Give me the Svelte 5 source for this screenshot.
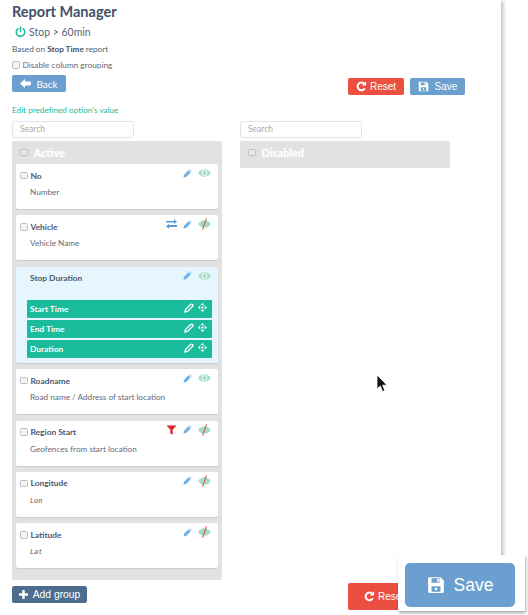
<script>
    const cards = [
        { name: 'No', desc: 'Number', check: true, hidden: false },
        { name: 'Vehicle', desc: 'Vehicle Name', check: true, hidden: true, extra: 'swap' },
        { name: 'Stop Duration', group: ['Start Time', 'End Time', 'Duration'], hidden: false },
        { name: 'Roadname', desc: 'Road name / Address of start location', check: true, hidden: false },
        { name: 'Region Start', desc: 'Geofences from start location', check: true, hidden: true, extra: 'filter' },
        { name: 'Longitude', desc: 'Lon', mono: true, check: true, hidden: true },
        { name: 'Latitude', desc: 'Lat', mono: true, check: true, hidden: true }
    ]
</script>

{#snippet floppy(size)}
    <svg width={size} height={size} viewBox="0 0 16 16">
        <path fill="#fff" d="M2 1h10l3 3v10a1 1 0 0 1-1 1H2a1 1 0 0 1-1-1V2a1 1 0 0 1 1-1z" />
        <path fill="#6a9fcf" d="M4 2h7v4H4zM4 9h8v5H4z" />
        <rect x="9" y="2.6" width="1.4" height="2.6" fill="#fff" />
        <circle cx="8" cy="11.5" r="1.2" fill="#fff" />
    </svg>
{/snippet}

{#snippet resetIcon()}
    <svg width="11" height="11" viewBox="0 0 12 12">
        <path fill="none" stroke="#fff" stroke-width="2.2" d="M9.6 8A4.2 4.2 0 1 1 9 3" />
        <path fill="#fff" d="M11 0.4V5H6.4z" />
    </svg>
{/snippet}

{#snippet pencil()}
    <svg width="9" height="9" viewBox="0 0 10 10">
        <path fill="#6eb0e4" d="M0.5 9.5l0.7-3 5-5 2.3 2.3-5 5zM7 0.8l0.6-0.5 2.1 2.1-0.6 0.6z" />
    </svg>
{/snippet}

{#snippet eye(off)}
    <svg width="13" height="12" viewBox="0 0 13 12">
        <path fill="#9fe0c4" d="M0.2 6C2 3.300 4 2.200 6.500 2.200S11 3.300 12.800 6C11 8.700 9 9.800 6.500 9.800S2 8.700 0.200 6z" />
        {#if off}
            <path stroke="#f0505a" stroke-width="1.1" d="M8.500 0.500L4.500 11.500" />
        {:else}
            <circle cx="6.500" cy="6" r="2.500" fill="none" stroke="#fff" stroke-width="1" />
        {/if}
    </svg>
{/snippet}

{#snippet swap()}
    <svg width="11" height="10" viewBox="0 0 11 10">
        <path fill="#5b9bd0" d="M0 2h8V0.200L11 2.800 8 5V3.400H0zM11 6H3V4.800L0 7.200 3 9.800V8h8z" />
    </svg>
{/snippet}

{#snippet filter()}
    <svg width="11" height="10" viewBox="0 0 11 10">
        <path fill="#d8252c" d="M0.500 0.500h10L6.700 4.800V9.800L4.300 8.600V4.800z" />
    </svg>
{/snippet}

{#snippet outlinePencil()}
    <svg width="10" height="10" viewBox="0 0 10 10">
        <path fill="none" stroke="#fff" stroke-width="1.300" d="M1 9l0.500-2.500 5-5a1 1 0 0 1 2 2l-5 5z" />
    </svg>
{/snippet}

{#snippet move()}
    <svg width="9" height="9" viewBox="0 0 9 9">
        <path fill="#fff" d="M4.500 0l2 2.200H2.500zM4.500 9L2.500 6.800h4zM0 4.500L2.200 2.500v4zM9 4.500L6.800 6.500v-4z" />
        <rect x="3.500" y="3.500" width="2" height="2" fill="#fff" />
    </svg>
{/snippet}

<div class="page">
    <h1>Report Manager</h1>
    <div class="subtitle">
        <svg width="11" height="12" viewBox="0 0 11 12">
            <path fill="none" stroke="#1abc9c" stroke-width="1.500" stroke-linecap="round" d="M5.500 1v4.500M3 2.700a4.200 4.200 0 1 0 5 0" />
        </svg>
        <span>Stop &gt; 60min</span>
    </div>
    <p class="based">Based on <b>Stop Time</b> report</p>
    <label class="grouping"><span class="check"></span>Disable column grouping</label>

    <div class="toolbar">
        <button class="btn back">
            <svg width="11" height="9" viewBox="0 0 11 9"><path fill="#fff" d="M0 4.500L5 0v2.500h5a1 1 0 0 1 1 1v2a1 1 0 0 1-1 1H5V9z" /></svg>
            Back
        </button>
        <div class="actions">
            <button class="btn reset">{@render resetIcon()}Reset</button>
            <button class="btn save">{@render floppy(11)}<span>Save</span></button>
        </div>
    </div>

    <p class="edit">Edit predefined option's value</p>

    <div class="columns">
        <div class="col">
            <div class="search">Search</div>
            <section class="panel">
                <div class="panel-head"><span class="check"></span>Active</div>
                {#each cards as card}
                    <div class="card" class:open={card.group}>
                        <div class="card-top">
                            {#if card.check}<span class="check"></span>{/if}
                            <strong class:nocheck={!card.check}>{card.name}</strong>
                            <div class="icons">
                                {#if card.extra === 'swap'}{@render swap()}{/if}
                                {#if card.extra === 'filter'}{@render filter()}{/if}
                                {@render pencil()}
                                {@render eye(card.hidden)}
                            </div>
                        </div>
                        {#if card.group}
                            <div class="fields">
                                {#each card.group as field}
                                    <div class="field">
                                        <span>{field}</span>
                                        <div class="field-icons">{@render outlinePencil()}{@render move()}</div>
                                    </div>
                                {/each}
                            </div>
                        {:else}
                            <div class="desc" class:mono={card.mono}>{card.desc}</div>
                        {/if}
                    </div>
                {/each}
            </section>
        </div>
        <div class="col">
            <div class="search">Search</div>
            <section class="panel disabled">
                <div class="panel-head"><span class="check"></span>Disabled</div>
            </section>
        </div>
    </div>

    <div class="footer">
        <button class="btn add">
            <svg width="9" height="9" viewBox="0 0 9 9"><path fill="#fff" d="M3.300 0h2.400v3.300H9v2.400H5.700V9H3.300V5.700H0V3.300h3.300z" /></svg>
            Add group
        </button>
        <button class="btn reset big">{@render resetIcon()}Reset</button>
    </div>
</div>

<div class="zoomed">
    <button class="btn save large">{@render floppy(18)}<span>Save</span></button>
</div>

<svg class="cursor" width="13" height="20" viewBox="0 0 13 20">
    <path fill="#111" stroke="#fff" stroke-width="0.800" d="M1 1v14l3.300-3 2.200 5.500 2.400-1-2.300-5.300H11z" />
</svg>

<style>
    :global(body) {
        background: #fff;
        font-family: Lato, 'Open Sans', sans-serif;
        color: #4a5568;
        overflow: hidden;
    }

    .page {
        box-sizing: border-box;
        width: 501px;
        height: 611px;
        padding: 2px 12px 0;
        box-shadow: 2px 1px 4px rgba(0, 0, 0, 0.28);
    }

    h1 {
        margin: 0;
        font-size: 14.500px;
        line-height: 19px;
        font-weight: 700;
        color: #3f5068;
    }

    .subtitle {
        display: flex;
        align-items: center;
        gap: 3px;
        margin: 4px 0 0 3px;
        font-size: 10.500px;
        line-height: 14px;
        color: #5a6577;
    }

    .based {
        margin: 5px 0 0;
        font-size: 8.200px;
        line-height: 11px;
        color: #55606f;
    }

    .based b {
        color: #3f5068;
    }

    .grouping {
        display: flex;
        align-items: center;
        margin-top: 4px;
        font-size: 8.300px;
        line-height: 12px;
        color: #5f6a7a;
    }

    .grouping .check {
        margin-right: 3px;
    }

    .check {
        flex: none;
        box-sizing: border-box;
        display: inline-block;
        width: 7.500px;
        height: 7.500px;
        background: #f3f3f3;
        border: 1px solid #c0c0c0;
        border-radius: 1.500px;
    }

    .btn {
        display: inline-flex;
        align-items: center;
        box-sizing: border-box;
        height: 17px;
        padding: 0;
        border: 0;
        border-radius: 2px;
        color: #fff;
        font-family: 'Liberation Sans', Arial, sans-serif;
        font-size: 10px;
    }

    .toolbar {
        display: flex;
        align-items: flex-start;
        justify-content: space-between;
        margin-top: 4px;
        padding-right: 24px;
    }

    .back {
        width: 54px;
        justify-content: center;
        gap: 5px;
        background: #6a9fcf;
        font-family: Lato, sans-serif;
        font-size: 10px;
    }

    .actions {
        display: flex;
        gap: 6px;
        margin-top: 3px;
    }

    .reset {
        width: 56px;
        justify-content: center;
        gap: 3px;
        background: #ea4f3f;
    }

    .save {
        width: 55px;
        justify-content: center;
        gap: 6px;
        background: #6a9fcf;
    }

    .edit {
        margin: 10px 0 0;
        font-size: 8.200px;
        line-height: 11px;
        color: #1abc9c;
    }

    .columns {
        display: flex;
        gap: 18px;
        margin-top: 5px;
    }

    .col {
        width: 210px;
    }

    .search {
        box-sizing: border-box;
        width: 122px;
        height: 17px;
        padding-left: 7px;
        border: 1px solid #dde6ef;
        border-radius: 3px;
        font-size: 8.500px;
        line-height: 15px;
        color: #a9a9a9;
    }

    .panel {
        box-sizing: border-box;
        height: 439px;
        margin-top: 3px;
        padding: 0 4px;
        background: #e2e2e2;
        border-radius: 2px;
    }

    .panel.disabled {
        height: 27px;
    }

    .panel-head {
        display: flex;
        align-items: center;
        gap: 6px;
        height: 23px;
        padding-left: 4px;
        font-size: 11px;
        font-weight: 700;
        color: #fff;
        text-shadow: 0 0 1px rgba(255, 255, 255, 0.6);
    }

    .panel-head .check {
        background: #e8e8e8;
    }

    .card {
        box-sizing: border-box;
        height: 45px;
        margin-bottom: 6.400px;
        padding: 0 4px;
        background: #fff;
        border-radius: 2px;
        box-shadow: 0 1px 1px rgba(0, 0, 0, 0.1);
    }

    .card.open {
        height: 96px;
        background: #e5f6fe;
    }

    .card-top {
        display: flex;
        align-items: center;
        gap: 3px;
        height: 22px;
        padding-top: 1px;
        box-sizing: border-box;
    }

    strong {
        font-size: 8.400px;
        font-weight: 700;
        color: #4c586b;
    }

    strong.nocheck {
        margin-left: 10px;
    }

    .icons {
        display: flex;
        align-items: center;
        gap: 6px;
        margin: -5px 3px 0 auto;
    }

    .desc {
        margin: 0 0 0 10px;
        padding-top: 1px;
        font-size: 8.200px;
        line-height: 11px;
        color: #5f6a7a;
    }

    .desc.mono {
        padding-top: 2px;
        font-family: 'DejaVu Sans Mono', monospace;
        font-style: italic;
        font-size: 6.800px;
        color: #555;
    }

    .fields {
        margin: 11px 2px 0 7px;
    }

    .field {
        display: flex;
        align-items: center;
        justify-content: space-between;
        height: 18px;
        margin-bottom: 2px;
        padding: 0 5px 0 3px;
        background: #1abc9c;
        border-radius: 1px;
        font-size: 8.400px;
        font-weight: 700;
        color: #fff;
    }

    .field-icons {
        display: flex;
        align-items: center;
        gap: 4px;
        margin-top: -2px;
    }

    .footer {
        display: flex;
        align-items: flex-start;
        justify-content: space-between;
        margin-top: 3px;
    }

    .add {
        width: 75px;
        justify-content: center;
        gap: 5px;
        margin-top: 3px;
        background: #4d6d8f;
        font-size: 10.300px;
    }

    .reset.big {
        width: 72px;
        height: 27px;
        margin-right: 69px;
    }

    .zoomed {
        position: absolute;
        left: 398px;
        top: 555px;
        box-sizing: border-box;
        width: 127px;
        height: 56px;
        padding: 8px 0 0 7px;
        background: #fff;
        box-shadow: 1px 2px 3px rgba(0, 0, 0, 0.35);
    }

    .large {
        width: 110px;
        height: 44px;
        gap: 9px;
        border-radius: 5px;
        font-size: 17.500px;
    }

    .cursor {
        position: absolute;
        left: 376px;
        top: 374px;
    }
</style>
